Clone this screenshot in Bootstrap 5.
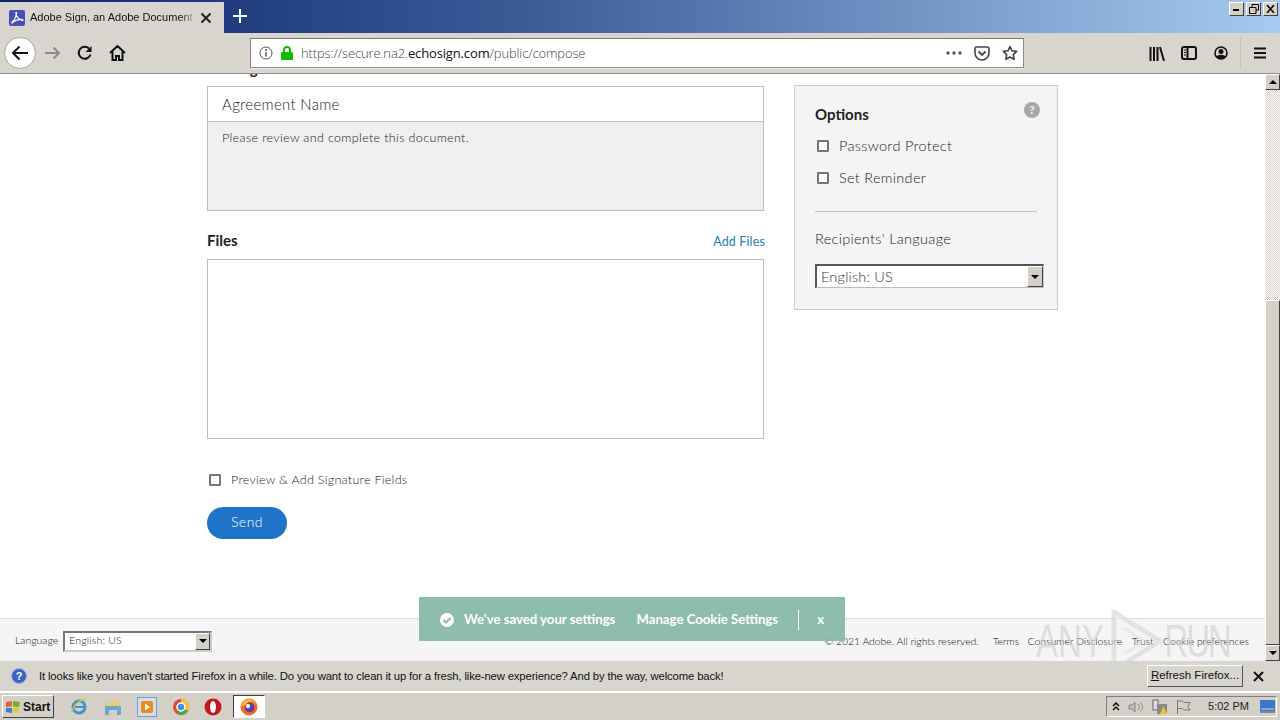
<!DOCTYPE html>
<html lang="en">
<head>
  <meta charset="UTF-8" />
  <meta name="viewport" content="width=device-width, initial-scale=1.0" />
  <title>Adobe Sign, an Adobe Document Cloud solution</title>
  <link rel="stylesheet" href="https://cdn.jsdelivr.net/npm/bootstrap@5.3.0/dist/css/bootstrap.min.css" />
  <style>
    html, body { height: 720px; overflow: hidden; }
    body { width: 1280px; background: #fff; font-family: "Lato", "Liberation Sans", sans-serif; font-weight: 300; color: #222; position: relative; }
    .sys-font { font-family: "Liberation Sans", sans-serif; font-weight: 400; color: #111; }

    /* browser chrome */
    .title-bar { height: 33px; background: linear-gradient(90deg, #0a246a 0%, #3a5a96 40%, #a6caf0 100%); }
    .ff-tab { width: 224px; margin-top: 2px; height: 31px; background: #d8d5cf; font-size: 11px; padding: 0 12px 0 9px; }
    .ff-tab-title { width: 167px; overflow: hidden; white-space: nowrap; margin-left: 5px; -webkit-mask-image: linear-gradient(90deg, #000 90%, transparent); mask-image: linear-gradient(90deg, #000 90%, transparent); }
    .new-tab { width: 32px; height: 31px; }
    .win-btns { gap: 2px; padding: 2px 2px 0 0; height: 16px; margin-left: auto; }
    .win-btn { width: 15px; height: 14px; background: #d4d0c8; border: 1px solid; border-color: #fff #404040 #404040 #fff; }
    .tool-bar { height: 41px; background: #d8d5cf; border-bottom: 1px solid #8e8c88; }
    .back-round { width: 32px; height: 32px; margin-left: 4px; margin-right: 1px; border-radius: 50%; background: #fff; border: 1px solid #aaa8a4; }
    .tool-slot { width: 32px; height: 32px; }
    .url-box { width: 774px; height: 30px; margin-left: 117px; background: #fff; border: 1px solid #8c8a86; border-top-color: #777; padding: 0 3px 0 8px; box-shadow: 0 1px 0 #eeece8; }
    .url-text { color: #444; font-family: "Open Sans", sans-serif; font-weight: 300; margin-left: 8px; padding-top: 1px; font-size: 13px; letter-spacing: -.14px; }
    .url-text b { color: #111; font-weight: 400; }
    .url-ico { margin-left: 12px; }
    .url-end { margin-right: 2px; }

    /* page */
    .view-area { height: 587px; }
    .page-col { width: 1265px; }
    .page-body { overflow: hidden; padding-left: 207px; gap: 30px; }
    .left-col { width: 557px; }
    .msg-label { margin-top: -16px; height: 20px; margin-bottom: 8px; font-size: 15px; font-weight: 700; color: #222; line-height: 20px; }
    .doc-box { border: 1px solid #bdbdbd; height: 125px; }
    .doc-name { height: 35px; border: 0; border-bottom: 1px solid #bdbdbd; border-radius: 0; padding: 0 14px; font-size: 15px; font-weight: 300; color: #222; letter-spacing: .3px; }
    .doc-name::placeholder { color: #222; }
    .doc-msg { height: 88px; border: 0; border-radius: 0; background: #efefef; padding: 7px 14px; font-size: 12.5px; font-weight: 300; color: #222; resize: none; letter-spacing: .35px; }
    .files-head { height: 20px; margin-top: 19px; margin-bottom: 9px; width: 558px; }
    .files-title { font-size: 15px; font-weight: 700; color: #222; }
    .add-link { font-size: 12.5px; font-weight: 400; color: #2b7cb3; text-decoration: none; letter-spacing: .14px; margin-top: 5px; }
    .files-box { height: 180px; border: 1px solid #bdbdbd; }
    .tick-box { appearance: none; width: 12px; height: 12px; margin: 0; border: 2px solid #777; background: #fff; border-radius: 1px; flex: none; }
    .preview-row { margin-top: 34px; padding-left: 2px; gap: 10px; font-size: 12.5px; letter-spacing: .29px; height: 14px; }
    .send-btn { width: 80px; height: 32px; margin-top: 20px; padding: 0 0 3px; background: #1f73c9; border: 0; border-radius: 16px; color: #fff; font-size: 14px; font-weight: 300; letter-spacing: .5px; }
    .send-btn:hover { background: #1f73c9; color: #fff; }

    .opts-panel { width: 264px; height: 225px; margin-top: 11px; background: #f4f4f4; border: 1px solid #ccc; padding: 19px 20px 0; position: relative; }
    .opts-title { font-size: 15px; font-weight: 700; color: #222; line-height: 18px; }
    .help-dot { position: absolute; right: 17px; top: 16px; width: 16px; height: 16px; border-radius: 50%; background: #a8a8a8; color: #f4f4f4; font-size: 12px; font-weight: 700; line-height: 16px; text-align: center; }
    .opt-row { gap: 10px; height: 32px; padding-left: 2px; font-size: 14.5px; letter-spacing: .3px; }
    .opt-list { margin-top: 7px; }
    .opts-rule { border-top: 1px solid #c4c4c4; margin: 17px 0 17px; width: 222px; }
    .recip-label { font-size: 14.5px; line-height: 20px; letter-spacing: .3px; }
    .fake-select { height: 24px; width: 229px; margin-top: 15px; background: #fff; border: 1px solid; border-color: #555 #ccc #bbb #555; border-width: 2px 1px 1px 2px; font-size: 14.5px; padding: 0 0 0 4px; color: #333; letter-spacing: .2px; }
    .sel-arrow { margin-left: auto; width: 16px; align-self: stretch; background: #d4d0c8; border: 1px solid; border-color: #fff #404040 #404040 #fff; }
    .foot-bar { height: 43px; background: #f5f5f5; border-top: 1px solid #ddd; padding: 2px 16px 0 15px; font-size: 10.5px; color: #111; }
    .foot-select { height: 21px; width: 149px; margin: 0 0 0 5px; font-size: 10.5px; color: #111; border-width: 2px; border-color: #777 #ccc #ccc #777; padding-left: 4px; }
    .foot-select .sel-arrow { width: 15px; }
    .foot-links { margin-left: auto; gap: 9.5px; padding-top: 2px; letter-spacing: -.08px; }
    .foot-links span:first-child { margin-right: 4.500px; }
    .foot-links span:nth-child(2) { margin-right: -1px; }

    /* scrollbar */
    .scroll-col { width: 15px; background-color: #eeece8; background-image: conic-gradient(#d4d0c8 25%, #fff 0 50%, #d4d0c8 0 75%, #fff 0); background-size: 2px 2px; }
    .scroll-btn { height: 16px; background: #d4d0c8; border: 1px solid; border-color: #fff #404040 #404040 #fff; }
    .scroll-thumb { height: 345px; margin-top: 210px; background: #d4d0c8; border: 1px solid; border-color: #fff #404040 #404040 #fff; }

    /* cookie toast, watermark */
    .cookie-toast { position: absolute; left: 419px; top: 597px; width: 426px; height: 44px; background: rgba(133, 184, 166, .93); color: #fff; font-size: 13.2px; font-weight: 700; padding: 1px 0 0 21px; }
    .toast-sep { width: 1px; height: 20px; background: #fff; margin: 0 18px 0 20px; }
    .any-mark { position: absolute; left: 1036px; top: 618px; color: rgba(205, 205, 205, .6); font-family: "Liberation Sans", sans-serif; font-size: 46px; font-weight: 400; line-height: 46px; pointer-events: none; transform: scaleX(.72); transform-origin: left; white-space: nowrap; }
    .any-mark span { margin-left: 84px; letter-spacing: -3px; }
    .any-play { position: absolute; left: 1110px; top: 608px; pointer-events: none; }

    /* firefox notification and taskbar */
    .note-bar { height: 31px; background: #d8d5cf; font-size: 11.3px; letter-spacing: -.14px; padding: 0 7px 0 11px; border-bottom: 1px solid #fff; }
    .note-btn { width: 96px; height: 22px; margin-left: auto; padding: 0; background: #d8d5cf; border: 1px solid; border-color: #fff #555 #555 #fff; border-radius: 0; font-size: 11.5px; color: #111; }
    .note-close { width: 30px; }
    .task-bar { height: 28px; background: #d4d0c8; border-top: 1px solid #fff; padding-left: 2px; }
    .start-btn { width: 52px; height: 23px; background: #d4d0c8; border: 1px solid; border-color: #fff #404040 #404040 #fff; font-size: 12px; font-weight: 700; color: #111; gap: 2px; padding-left: 2px; }
    .quick-icons { gap: 14.5px; margin-left: 16px; }
    .active-app { width: 32px; height: 23px; margin-left: -3.5px; background: #fff; border: 1px solid; border-color: #404040 #fff #fff #404040; }
    .tray-box { width: 171px; height: 21px; margin-left: auto; margin-right: 3px; border: 1px solid; border-color: #808080 #fff #fff #808080; font-size: 11px; color: #222; padding: 0 1px 0 5px; }
    .tray-clock { margin-left: auto; margin-right: 11px; }
  </style>
</head>
<body class="d-flex flex-column">

  <div class="title-bar d-flex">
    <div class="ff-tab sys-font d-flex align-items-center">
      <svg width="16" height="16" viewBox="0 0 16 16"><rect width="16" height="16" rx="2" fill="#4a4fb5"/><path d="M2.500 12.500C5 11 7 7 7.500 3c.3-1-.6-1-.6 0 0 3 3 7 6.500 7.500 1 0 .8-1-.3-1-3-.2-7 1-10 3-.6.6 0 1 .4 .5" fill="none" stroke="#fff" stroke-width="1.200"/></svg>
      <span class="ff-tab-title">Adobe Sign, an Adobe Document Cloud</span>
      <svg width="12" height="12" viewBox="0 0 12 12" class="ms-auto"><path d="M1.500 1.500l9 9M10.500 1.500l-9 9" stroke="#222" stroke-width="2"/></svg>
    </div>
    <div class="new-tab d-flex align-items-center justify-content-center">
      <svg width="14" height="14" viewBox="0 0 14 14"><path d="M7 0v14M0 7h14" stroke="#fff" stroke-width="2"/></svg>
    </div>
    <div class="win-btns d-flex">
      <div class="win-btn d-flex align-items-end justify-content-center pb-1"><svg width="7" height="2"><rect width="6" height="2" fill="#000"/></svg></div>
      <div class="win-btn d-flex align-items-center justify-content-center"><svg width="10" height="10" viewBox="0 0 10 10"><path d="M3 3V.5h6.500V6H7M.5 3.500H7v6H.5z" fill="none" stroke="#000"/></svg></div>
      <div class="win-btn d-flex align-items-center justify-content-center"><svg width="9" height="8" viewBox="0 0 9 8"><path d="M1 0l7 8M8 0L1 8" stroke="#000" stroke-width="1.500"/></svg></div>
    </div>
  </div>

  <div class="tool-bar d-flex align-items-center">
    <div class="back-round d-flex align-items-center justify-content-center">
      <svg width="18" height="16" viewBox="0 0 18 16"><path d="M17 8H2M8.500 1.500L2 8l6.500 6.500" fill="none" stroke="#111" stroke-width="2"/></svg>
    </div>
    <div class="tool-slot d-flex align-items-center justify-content-center">
      <svg width="16" height="14" viewBox="0 0 16 14"><path d="M0 7h14M8.500 1.500L14 7l-5.500 5.500" fill="none" stroke="#8c8a86" stroke-width="2"/></svg>
    </div>
    <div class="tool-slot d-flex align-items-center justify-content-center">
      <svg width="16" height="16" viewBox="0 0 16 16"><path d="M13.500 9.500A6 6 0 1 1 12 3.500" fill="none" stroke="#111" stroke-width="2"/><path d="M14.500 1v6h-6z" fill="#111"/></svg>
    </div>
    <div class="tool-slot d-flex align-items-center justify-content-center">
      <svg width="17" height="16" viewBox="0 0 17 16"><path d="M1 8l7.500-7L16 8M3.500 6.500V15h3.500v-4h3v4h3.500V6.500" fill="none" stroke="#111" stroke-width="2"/></svg>
    </div>
    <div class="url-box d-flex align-items-center">
      <svg width="14" height="14" viewBox="0 0 14 14"><circle cx="7" cy="7" r="6" fill="none" stroke="#555"/><path d="M7 6v4.500" stroke="#555" stroke-width="1.500"/><circle cx="7" cy="4" r="1" fill="#555"/></svg>
      <svg class="ms-2" width="12" height="14" viewBox="0 0 12 14"><path d="M3 6V4a3 3 0 0 1 6 0v2" fill="none" stroke="#12bc00" stroke-width="2"/><rect y="6" width="12" height="8" rx="1" fill="#12bc00"/></svg>
      <span class="url-text">https://secure.na2.<b>echosign.com</b>/public/compose</span>
      <svg class="ms-auto" width="16" height="4" viewBox="0 0 16 4"><circle cx="2" cy="2" r="1.700" fill="#555"/><circle cx="8" cy="2" r="1.700" fill="#555"/><circle cx="14" cy="2" r="1.700" fill="#555"/></svg>
      <svg class="url-ico" width="16" height="15" viewBox="0 0 16 15"><path d="M1 2.500c0-.8.500-1.500 1.500-1.500h11c1 0 1.500.7 1.500 1.500V7a7 7 0 0 1-14 0z" fill="none" stroke="#444" stroke-width="1.600"/><path d="M4.500 5.500L8 9l3.500-3.500" fill="none" stroke="#444" stroke-width="1.800"/></svg>
      <svg class="url-ico url-end" width="16" height="16" viewBox="0 0 16 16"><path d="M8 1.500l2 4.300 4.700.6-3.400 3.200.9 4.700L8 12l-4.200 2.300.9-4.700L1.300 6.400 6 5.800z" fill="none" stroke="#444" stroke-width="1.600" stroke-linejoin="round"/></svg>
    </div>
    <div class="tool-slot d-flex align-items-center justify-content-center" style="margin-left:117px">
      <svg width="16" height="15" viewBox="0 0 16 15"><path d="M1.500 1v14M5 1v14M8.500 1v14M11 1l4 14" fill="none" stroke="#111" stroke-width="2"/></svg>
    </div>
    <div class="tool-slot d-flex align-items-center justify-content-center">
      <svg width="16" height="14" viewBox="0 0 16 14"><rect x="1" y="1" width="14" height="12" rx="2" fill="none" stroke="#111" stroke-width="2"/><path d="M6.500 1v12" stroke="#111" stroke-width="2"/><path d="M3 4h2M3 6.500h2M3 9h2" stroke="#111"/></svg>
    </div>
    <div class="tool-slot d-flex align-items-center justify-content-center">
      <svg width="14" height="14" viewBox="0 0 14 14"><circle cx="7" cy="7" r="6" fill="none" stroke="#111" stroke-width="1.600"/><circle cx="7" cy="5.500" r="2.500" fill="#111"/><path d="M2.500 11c1-3 8-3 9 0l-2 2h-5z" fill="#111"/></svg>
    </div>
    <div class="tool-slot d-flex align-items-center justify-content-center" style="width:39px;margin-left:3px;border-left:1px solid #c8c5bf">
      <svg width="14" height="12" viewBox="0 0 14 12"><path d="M1 1.500h12M1 6h12M1 10.500h12" stroke="#111" stroke-width="2"/></svg>
    </div>
  </div>

  <div class="view-area d-flex">
    <div class="page-col d-flex flex-column">
      <div class="page-body flex-grow-1 d-flex align-items-start">
        <div class="left-col">
          <div class="msg-label">Message</div>
          <div class="doc-box">
            <input class="form-control doc-name shadow-none" type="text" placeholder="Agreement Name" />
            <textarea class="form-control doc-msg shadow-none">Please review and complete this document.</textarea>
          </div>
          <div class="files-head d-flex align-items-center justify-content-between">
            <span class="files-title">Files</span>
            <a class="add-link" href="#">Add Files</a>
          </div>
          <div class="files-box"></div>
          <label class="preview-row d-flex align-items-center">
            <input class="tick-box" type="checkbox" />
            <span>Preview &amp; Add Signature Fields</span>
          </label>
          <button class="btn send-btn d-block" type="button">Send</button>
        </div>
        <div class="opts-panel">
          <div class="opts-title">Options</div>
          <span class="help-dot">?</span>
          <div class="opt-list">
            <label class="opt-row d-flex align-items-center"><input class="tick-box" type="checkbox" /><span>Password Protect</span></label>
            <label class="opt-row d-flex align-items-center"><input class="tick-box" type="checkbox" /><span>Set Reminder</span></label>
          </div>
          <div class="opts-rule"></div>
          <div class="recip-label">Recipients' Language</div>
          <div class="fake-select d-flex align-items-center">
            <span>English: US</span>
            <span class="sel-arrow d-flex align-items-center justify-content-center"><svg width="8" height="4"><path d="M0 0h8L4 4z" fill="#000"/></svg></span>
          </div>
        </div>
      </div>
      <div class="foot-bar d-flex align-items-center">
        <span>Language</span>
        <div class="fake-select foot-select d-flex align-items-center">
          <span>English: US</span>
          <span class="sel-arrow d-flex align-items-center justify-content-center"><svg width="8" height="4"><path d="M0 0h8L4 4z" fill="#000"/></svg></span>
        </div>
        <div class="foot-links d-flex">
          <span>© 2021 Adobe. All rights reserved.</span>
          <span>Terms</span>
          <span>Consumer Disclosure</span>
          <span>Trust</span>
          <span>Cookie preferences</span>
        </div>
      </div>
    </div>
    <div class="scroll-col d-flex flex-column">
      <div class="scroll-btn d-flex align-items-center justify-content-center"><svg width="8" height="4"><path d="M4 0l4 4H0z" fill="#000"/></svg></div>
      <div class="scroll-thumb"></div>
      <div class="scroll-btn d-flex align-items-center justify-content-center"><svg width="8" height="4"><path d="M0 0h8L4 4z" fill="#000"/></svg></div>
    </div>
  </div>

  <div class="note-bar sys-font d-flex align-items-center">
    <svg width="16" height="16" viewBox="0 0 16 16"><circle cx="8" cy="8" r="7.500" fill="#3a62c4" stroke="#9cb4e8"/><text x="8" y="12" text-anchor="middle" font-size="11" font-weight="700" fill="#fff" font-family="Liberation Sans">?</text></svg>
    <span class="ms-2 ps-1">It looks like you haven't started Firefox in a while. Do you want to clean it up for a fresh, like-new experience? And by the way, welcome back!</span>
    <button class="btn note-btn sys-font" type="button"><u>R</u>efresh Firefox...</button>
    <div class="note-close d-flex justify-content-center">
      <svg width="11" height="11" viewBox="0 0 11 11"><path d="M1 1l9 9M10 1l-9 9" stroke="#111" stroke-width="2"/></svg>
    </div>
  </div>

  <div class="task-bar sys-font d-flex align-items-center">
    <div class="start-btn d-flex align-items-center">
      <svg width="16" height="14" viewBox="0 0 16 14"><path d="M1 2l6-1v5.500L1 7z" fill="#e2622a"/><path d="M8 1l7 1-1 5-6-.5z" fill="#6fb23b"/><path d="M1 8l6 0v5l-6-1z" fill="#3a7fd4"/><path d="M8 7.500l6 .5-1 5-5-.5z" fill="#f2c12e"/></svg>
      <span>Start</span>
    </div>
    <div class="quick-icons d-flex align-items-center">
      <svg width="18" height="18" viewBox="0 0 18 18"><circle cx="9" cy="9" r="6" fill="none" stroke="#3d95d8" stroke-width="3"/><path d="M4 9h10" stroke="#3d95d8" stroke-width="2"/><path d="M2 14C4 6 12 0 16 2" fill="none" stroke="#e8b93c" stroke-width="1.500"/></svg>
      <svg width="20" height="18" viewBox="0 0 20 18"><path d="M2 5h6l2-2h7v6H2z" fill="#e8cc72"/><path d="M2 8h16v9h-4v-5H6v5H2z" fill="#6aa9cf"/></svg>
      <svg width="20" height="20" viewBox="0 0 20 20"><rect x=".5" y=".5" width="19" height="19" fill="#cfdff2" stroke="#6f9fd6"/><rect x="4" y="4" width="12" height="12" rx="2" fill="#f08a1d"/><path d="M8 6.500l5 3.500-5 3.500z" fill="#fff"/></svg>
      <svg width="18" height="18" viewBox="0 0 18 18"><circle cx="9" cy="9" r="8" fill="#dc4a3c"/><path d="M9 9L16 13A8 8 0 0 1 5 16z" fill="#4aa84f"/><path d="M9 1a8 8 0 0 1 7 12L9 9z" fill="#f4c430"/><circle cx="9" cy="9" r="4" fill="#4a8bf0" stroke="#fff" stroke-width="1.500"/></svg>
      <svg width="18" height="18" viewBox="0 0 18 18"><circle cx="9" cy="9" r="8.500" fill="#c8141c"/><ellipse cx="9" cy="9" rx="3" ry="6" fill="#fff"/></svg>
      <div class="active-app d-flex align-items-center justify-content-center">
        <svg width="18" height="18" viewBox="0 0 18 18"><circle cx="9" cy="9" r="8.500" fill="#f2701f"/><circle cx="9.500" cy="9.500" r="5" fill="#5b3fb0"/><path d="M1 8c1-4 4-7 8-7 3 0 6 2 7 5-2-2-5-3-7-2-2 0-3 2-3 3z" fill="#ffb52e"/><circle cx="8" cy="8" r="2.200" fill="#f7e3d0"/></svg>
      </div>
    </div>
    <div class="tray-box d-flex align-items-center">
      <svg width="8" height="9" viewBox="0 0 8 9"><path d="M1 4l3-3 3 3M1 8l3-3 3 3" fill="none" stroke="#111" stroke-width="1.500"/></svg>
      <svg class="ms-2" width="16" height="14" viewBox="0 0 16 14"><path d="M1 5h3l3-3v10L4 9H1z" fill="#bbb" stroke="#888"/><path d="M10 4c1.500 1.500 1.500 4.500 0 6M12.500 2.500c2.500 2.500 2.500 6.500 0 9" fill="none" stroke="#888"/></svg>
      <svg class="ms-2" width="16" height="16" viewBox="0 0 16 16"><rect x="1" y="1" width="5" height="10" fill="#ddd" stroke="#666"/><rect x="5" y="5" width="10" height="10" fill="#8c8a86"/><path d="M11.500 7l3.500 8H8z" fill="#f2c12e"/></svg>
      <svg class="ms-2" width="15" height="15" viewBox="0 0 15 15"><path d="M1.500 1v14M1.500 2h5l1.500 1.500h6l-2 4 2 3.500H8l-1.500-1.500h-5" fill="none" stroke="#777"/></svg>
      <span class="tray-clock">5:02 PM</span>
      <svg width="15" height="13" viewBox="0 0 15 13"><rect width="15" height="11" fill="#3c78c8"/><rect x="1" y="8" width="13" height="2" fill="#7aa8e0"/><rect y="11" width="15" height="2" fill="#888"/></svg>
    </div>
  </div>

  <div class="cookie-toast d-flex align-items-center">
    <svg width="14" height="14" viewBox="0 0 14 14"><circle cx="7" cy="7" r="7" fill="#fff"/><path d="M3.500 7l2.500 2.500 4.500-4.500" fill="none" stroke="#85b8a6" stroke-width="1.800"/></svg>
    <span style="margin-left:10px">We've saved your settings</span>
    <span style="margin-left:21px">Manage Cookie Settings</span>
    <span class="toast-sep"></span>
    <span>x</span>
  </div>

  <svg class="any-play" width="56" height="66" viewBox="0 0 56 66"><path d="M4 4l46 29L4 62z" fill="none" stroke="rgba(215,215,215,.65)" stroke-width="5" stroke-linejoin="round"/><path d="M14 20l20 13-20 13" fill="none" stroke="rgba(215,215,215,.4)" stroke-width="3"/></svg>
  <div class="any-mark">ANY<span>RUN</span></div>

</body>
</html>
